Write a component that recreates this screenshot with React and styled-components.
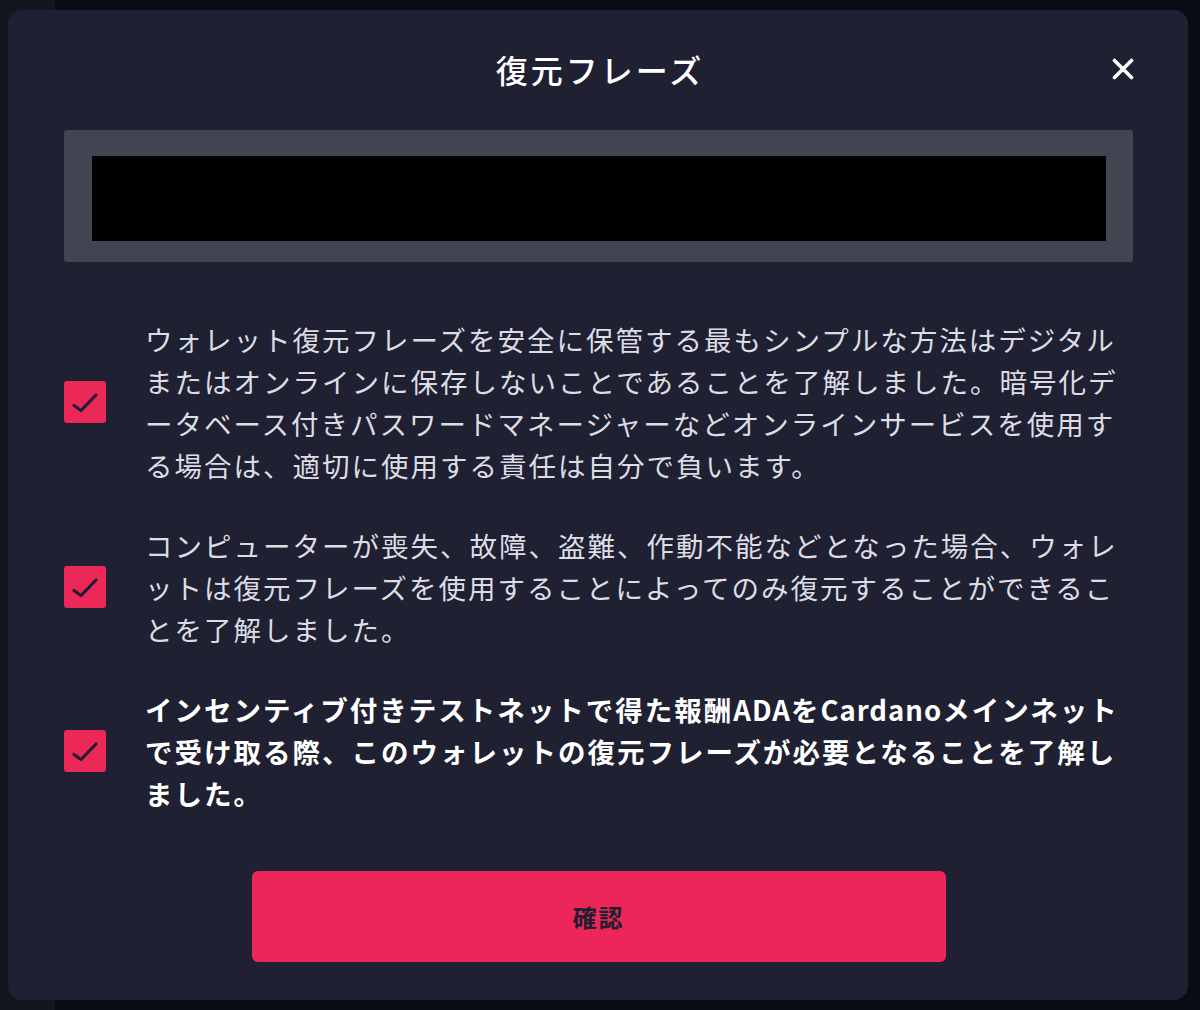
import React from 'react';
import styled, { createGlobalStyle } from 'styled-components';

const GlobalStyle = createGlobalStyle`
  html, body {
    margin: 0;
    padding: 0;
  }
  body {
    background: linear-gradient(to right, #13151f 0, #13151f 55px, #090b15 55px);
    font-family: "Noto Sans CJK JP", "Noto Sans", sans-serif;
    min-height: 1010px;
  }
`;

const Page = styled.div`
  padding: 10px 12px 10px 8px;
`;

const Modal = styled.div`
  background: #1f2031;
  border-radius: 14px;
  padding: 39px 55px 38px 56px;
`;

const Header = styled.div`
  display: grid;
  grid-template-columns: 1fr auto 1fr;
  align-items: center;
  height: 40px;
`;

const Title = styled.h2`
  grid-column: 2;
  margin: 0 0 0 3px;
  font-size: 32px;
  font-weight: 500;
  letter-spacing: 3px;
  line-height: 40px;
  color: #ffffff;
`;

const Close = styled.button`
  grid-column: 3;
  justify-self: end;
  display: flex;
  align-items: center;
  justify-content: center;
  width: 22px;
  height: 22px;
  margin-right: -1px;
  padding: 0;
  border: none;
  background: none;
  cursor: pointer;
`;

const PhraseBox = styled.div`
  margin-top: 41px;
  background: #434452;
  border-radius: 3px;
  padding: 26px 27px 21px 28px;
`;

const PhraseMask = styled.div`
  height: 85px;
  background: #000;
`;

const Checklist = styled.div`
  margin-top: 56px;
  display: flex;
  flex-direction: column;
  gap: 38px;
`;

const Item = styled.label`
  display: grid;
  grid-template-columns: 42px 1fr;
  column-gap: 39px;
  align-items: center;
  cursor: pointer;
`;

const Box = styled.span`
  width: 42px;
  height: 42px;
  border-radius: 3px;
  background: #ec2858;
  display: flex;
  align-items: center;
  justify-content: center;
`;

const Text = styled.p`
  margin: 0;
  font-size: 27.5px;
  line-height: 42px;
  letter-spacing: 2px;
  line-break: normal;
  word-break: normal;
  font-weight: ${(p) => (p.$strong ? 700 : 400)};
  color: ${(p) => (p.$strong ? '#ffffff' : '#dcdde4')};
`;

const Latin = styled.span`
  letter-spacing: 1px;
`;

const ConfirmButton = styled.button`
  display: block;
  margin: 57px auto 0;
  width: 694px;
  height: 91px;
  border: none;
  border-radius: 6px;
  background: #ec2658;
  color: #1e1f30;
  font-family: inherit;
  font-size: 24px;
  font-weight: 700;
  letter-spacing: 2px;
  cursor: pointer;
`;

const Check = () => (
  <svg width="42" height="42" viewBox="0 0 42 42" fill="none">
    <path
      d="M10 24.5L17 29.5L32 14"
      stroke="#1e1f30"
      strokeWidth="3.2"
      strokeLinecap="round"
      strokeLinejoin="round"
    />
  </svg>
);

const CloseIcon = () => (
  <svg width="22" height="22" viewBox="0 0 22 22" fill="none">
    <path d="M2.5 2.5L19.5 19.5M19.5 2.5L2.5 19.5" stroke="#ffffff" strokeWidth="3.6" strokeLinecap="round" />
  </svg>
);

const items = [
  {
    text: 'ウォレット復元フレーズを安全に保管する最もシンプルな方法はデジタルまたはオンラインに保存しないことであることを了解しました。暗号化データベース付きパスワードマネージャーなどオンラインサービスを使用する場合は、適切に使用する責任は自分で負います。',
  },
  {
    text: 'コンピューターが喪失、故障、盗難、作動不能などとなった場合、ウォレットは復元フレーズを使用することによってのみ復元することができることを了解しました。',
  },
  {
    text: (
      <>
        インセンティブ付きテストネットで得た報酬<Latin>ADA</Latin>を<Latin>Cardano</Latin>
        メインネットで受け取る際、このウォレットの復元フレーズが必要となることを了解しました。
      </>
    ),
    strong: true,
  },
];

export default function App() {
  return (
    <>
      <GlobalStyle />
      <Page lang="ja">
        <Modal>
          <Header>
            <Title>復元フレーズ</Title>
            <Close aria-label="閉じる">
              <CloseIcon />
            </Close>
          </Header>
          <PhraseBox>
            <PhraseMask />
          </PhraseBox>
          <Checklist>
            {items.map((item, i) => (
              <Item key={i}>
                <Box>
                  <Check />
                </Box>
                <Text $strong={item.strong}>{item.text}</Text>
              </Item>
            ))}
          </Checklist>
          <ConfirmButton>確認</ConfirmButton>
        </Modal>
      </Page>
    </>
  );
}
